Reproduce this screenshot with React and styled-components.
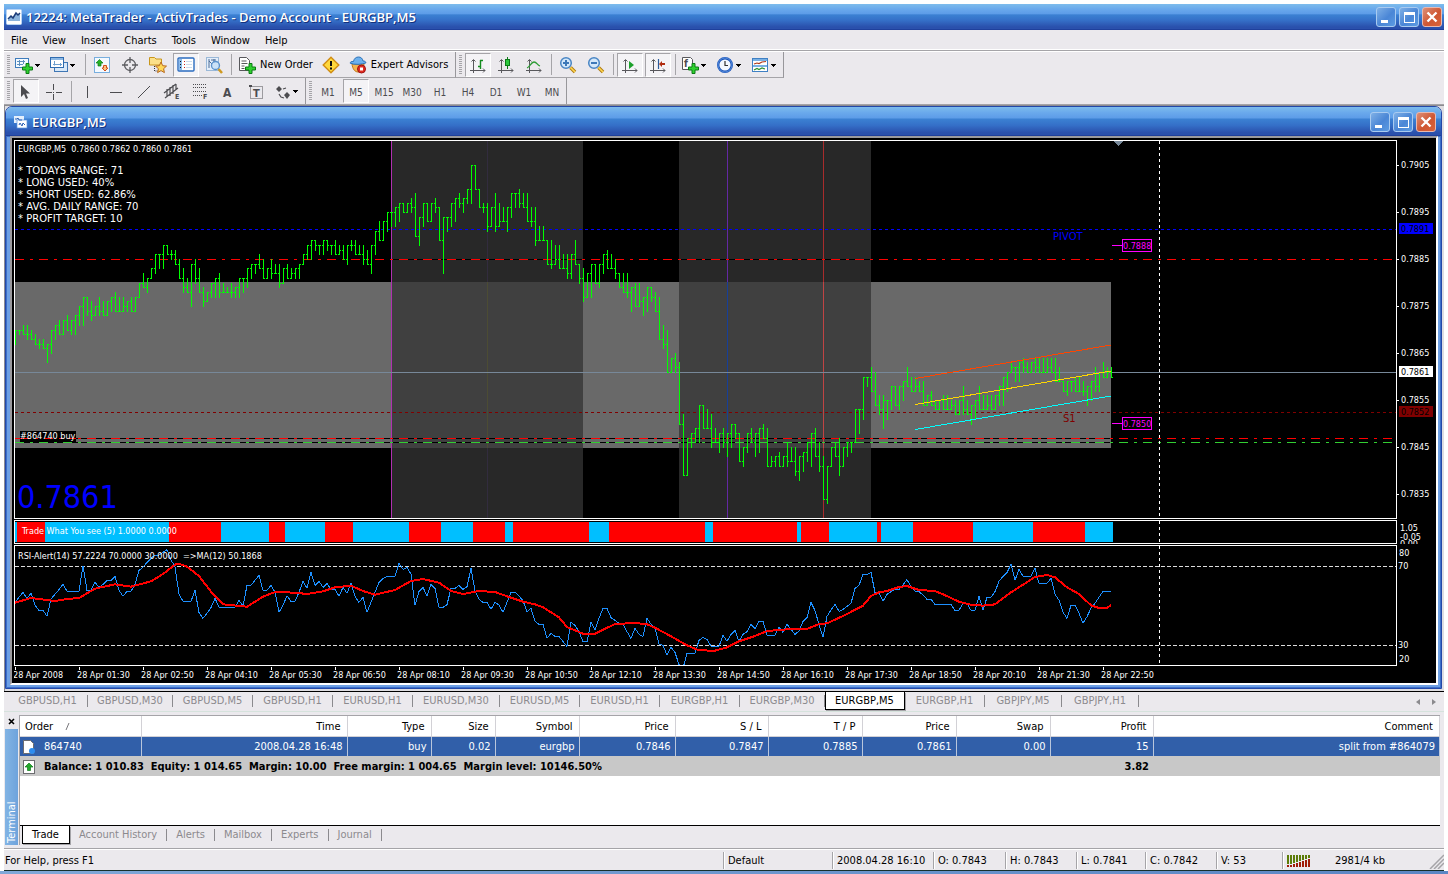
import React from "react";
import styled, { createGlobalStyle, css } from "styled-components";

const GlobalStyle = createGlobalStyle`
  * {
    box-sizing: border-box;
  }
  body {
    margin: 0;
    background: #fff;
    color: #000;
    font-family: "DejaVu Sans Condensed", "DejaVu Sans", sans-serif;
    font-size: 11px;
    line-height: 14px;
  }
  button {
    font: inherit;
    color: inherit;
    background: none;
    border: 0;
    padding: 0;
    cursor: pointer;
  }
`;

const titleGradient = "linear-gradient(#7dbcec 0%, #6aa9ec 20%, #5e9de8 38%, #3b80d2 44%, #3570c8 65%, #2a50ac 92%)";

/* ---------- data ---------- */

// high / low of every bar, in pips below 0.7905
const BARS =
  "35-38 35-36 34-36 34-37 35-37 36-38 37-39 37-39 38-42 35-40 34-37 33-36 33-36 32-35 33-36 32-36 30-34 28-34 28-32 29-33 " +
  "30-32 28-32 29-32 29-32 28-31 27-31 28-31 28-31 29-31 28-31 28-31 25-28 23-26 24-27 22-24 19-23 19-22 17-22 17-19 18-20 " +
  "18-21 20-24 22-27 24-27 21-30 20-25 22-27 26-30 27-29 25-28 24-28 23-28 25-27 26-27 25-28 26-28 24-28 24-27 22-26 21-24 " +
  "21-23 19-22 20-24 22-24 20-24 21-23 21-26 22-25 21-24 22-24 22-24 21-24 19-21 17-20 16-20 16-18 17-19 16-19 16-18 17-19 " +
  "16-19 17-19 17-20 17-21 16-18 16-19 17-19 17-21 18-21 17-23 14-19 12-16 12-16 10-14 10-13 9-13 8-12 8-10 8-10 7-10 " +
  "6-15 11-17 8-13 8-12 8-12 7-10 9-16 11-23 11-14 8-13 7-12 6-9 7-10 5-8 0-8 0-5 5-9 8-10 8-14 9-13 " +
  "6-14 8-13 9-12 9-14 6-11 6-9 5-9 6-9 6-12 9-13 9-17 13-16 13-16 16-21 16-22 17-21 17-22 19-22 19-24 19-24 " +
  "16-21 21-25 22-29 23-28 21-28 21-25 21-26 19-23 18-22 19-22 20-24 23-26 23-27 23-28 26-31 25-30 25-30 28-32 26-31 26-29 " +
  "27-31 28-37 34-39 35-44 41-44 40-44 42-55 53-66 58-66 57-60 56-59 51-59 51-56 52-56 53-60 56-59 57-61 56-60 57-62 55-60 " +
  "55-58 57-63 60-64 57-61 56-59 57-62 56-61 55-58 56-64 62-64 62-64 61-64 62-64 59-64 60-63 60-66 62-67 61-65 59-63 57-64 " +
  "56-62 59-65 62-71 64-72 60-64 59-62 58-66 60-64 59-62 59-61 52-59 52-57 45-54 45-47 43-48 44-51 49-53 49-56 50-54 47-52 " +
  "47-51 47-52 46-50 43-47 45-48 45-48 46-48 46-51 49-51 48-51 50-52 50-52 49-52 49-52 50-52 50-53 50-53 47-53 50-53 51-55 " +
  "50-54 47-52 49-52 49-52 49-52 49-52 47-51 45-51 44-48 42-44 43-46 42-46 41-44 42-44 42-44 41-44 41-44 41-44 41-44 41-44 " +
  "41-46 43-46 46-48 46-49 46-48 45-48 45-48 46-49 47-51 46-50 43-48 44-48 42-45 43-45 43-45";

const bars = BARS.split(" ").map((pair) => {
  const [high, low] = pair.split("-").map(Number);
  return { high, low };
});

// one sample per bar, three units to the pixel
const RSI = [
  607, 592, 577, 595, 580, 615, 631, 631, 649, 597, 583, 569, 553, 574, 574, 574, 574, 497, 571, 571, 547, 562, 553, 541,
  541, 529, 571, 589, 574, 574, 553, 511, 502, 487, 475, 465, 465, 457, 449, 480, 500, 583, 604, 604, 604, 571, 637, 655,
  640, 623, 595, 622, 622, 622, 622, 622, 601, 618, 556, 556, 541, 526, 571, 571, 556, 577, 637, 616, 587, 604, 604, 577,
  544, 565, 517, 556, 544, 562, 550, 568, 568, 589, 562, 580, 550, 589, 607, 592, 637, 607, 577, 547, 535, 529, 529, 529,
  490, 508, 502, 523, 616, 574, 562, 589, 553, 565, 622, 622, 614, 565, 565, 556, 568, 560, 505, 573, 598, 607, 607, 628,
  607, 615, 637, 607, 577, 577, 588, 602, 636, 625, 664, 673, 673, 715, 700, 709, 709, 725, 739, 667, 676, 695, 725, 725,
  667, 691, 655, 625, 625, 653, 661, 670, 673, 695, 715, 685, 703, 709, 655, 673, 685, 733, 736, 766, 742, 757, 794, 805,
  760, 760, 760, 721, 712, 718, 739, 739, 739, 706, 724, 703, 691, 724, 703, 695, 673, 686, 664, 664, 706, 706, 706, 682,
  697, 673, 688, 703, 693, 664, 653, 607, 632, 673, 712, 649, 630, 613, 634, 628, 619, 610, 565, 556, 523, 523, 517, 577,
  580, 604, 583, 575, 568, 568, 555, 539, 561, 573, 575, 585, 598, 598, 613, 613, 613, 613, 613, 631, 631, 611, 611, 631,
  631, 589, 631, 592, 592, 575, 544, 529, 518, 493, 541, 508, 529, 529, 529, 505, 550, 550, 550, 535, 583, 601, 637, 655,
  616, 616, 640, 670, 650, 625, 610, 592, 574, 574, 574,
];

const MA = [
  [0, 608], [4, 594], [10, 603], [13, 597], [16, 594], [20, 566], [25, 553], [29, 560], [34, 544], [37, 522], [40, 494],
  [41, 491], [43, 500], [46, 528], [49, 575], [52, 613], [58, 620], [62, 590], [65, 576], [70, 578], [73, 582], [77, 574],
  [80, 562], [84, 557], [87, 573], [90, 584], [95, 570], [99, 543], [102, 537], [106, 548], [109, 573], [112, 582],
  [116, 573], [120, 576], [123, 589], [127, 605], [130, 613], [132, 622], [136, 652], [138, 681], [142, 701], [145, 701],
  [150, 672], [155, 669], [158, 673], [160, 683], [164, 709], [168, 736], [171, 751], [175, 752], [178, 742], [181, 724],
  [185, 708], [188, 693], [193, 688], [198, 687], [201, 672], [203, 670], [207, 648], [212, 617], [214, 588], [216, 577],
  [218, 573], [221, 561], [223, 558], [226, 570], [230, 573], [232, 583], [236, 605], [239, 614], [242, 617], [245, 613],
  [249, 577], [252, 554], [255, 531], [258, 525], [260, 532], [263, 562], [266, 582], [269, 616], [271, 624], [273, 623],
  [274, 616],
];

// x where each trend block ends, starting with an up block
const TREND_STOPS = [
  2, 30, 154, 206, 254, 270, 310, 338, 394, 426, 458, 490, 498, 574, 594, 690, 698, 782, 786, 814, 862, 866, 898, 958,
  1018, 1070, 1098,
];

const TIMES = [
  "2008", "01:30", "02:50", "04:10", "05:30", "06:50", "08:10", "09:30", "10:50", "12:10", "13:30", "14:50", "16:10",
  "17:30", "18:50", "20:10", "21:30", "22:50",
];

const PRICES = ["0.7905", "0.7895", "0.7885", "0.7875", "0.7865", "0.7855", "0.7845", "0.7835"];

const RANGE_INFO = [
  "TODAYS RANGE: 71",
  "LONG USED: 40%",
  "SHORT USED: 62.86%",
  "AVG. DAILY RANGE: 70",
  "PROFIT TARGET: 10",
];

const CHART_TABS = [
  ["GBPUSD,H1", 80], ["GBPUSD,M30", 85], ["GBPUSD,M5", 80], ["GBPUSD,H1", 80], ["EURUSD,H1", 80], ["EURUSD,M30", 87],
  ["EURUSD,M5", 80], ["EURUSD,H1", 80], ["EURGBP,H1", 80], ["EURGBP,M30", 85], ["EURGBP,M5", 80], ["EURGBP,H1", 80],
  ["GBPJPY,M5", 77], ["GBPJPY,H1", 77],
];

const COLUMNS = [
  ["Order", 121], ["Time", 206], ["Type", 84], ["Size", 64], ["Symbol", 84], ["Price", 96], ["S / L", 93],
  ["T / P", 94], ["Price", 94], ["Swap", 94], ["Profit", 103], ["Comment", undefined],
];

const ORDER = [
  "864740", "2008.04.28 16:48", "buy", "0.02", "eurgbp", "0.7846", "0.7847", "0.7885", "0.7861", "0.00", "15",
  "split from #864079",
];

const barX = (i) => i * 4;
const priceY = (pips) => Math.round(24 + pips * 4.7);
const rsiY = (v) => v / 3 - 146;

/* ---------- window chrome ---------- */

const Page = styled.div`
  display: flex;
  flex-direction: column;
  min-height: 100vh;
  padding: 4px 4px 0;
`;

const TitleBar = styled.header`
  display: flex;
  align-items: center;
  gap: 4px;
  height: ${(p) => (p.$child ? 29 : 26)}px;
  padding: ${(p) => (p.$child ? "1px 5px 0 8px" : "0 2px")};
  background: ${titleGradient};
  border-bottom: 1px solid #1f409c;
`;

const Title = styled.h1`
  flex: 1;
  margin: 0;
  color: #fff;
  font: 600 13px/18px "Open Sans", "Noto Sans", sans-serif;
  text-shadow: 1px 1px 0 #14317c;
  white-space: nowrap;
`;

const WindowButtons = styled.div`
  display: flex;
  gap: 3px;
`;

const WindowButton = styled.button`
  width: 20px;
  height: 20px;
  border: 1px solid ${(p) => (p.$close ? "#e8b9b0" : "#a9cbf0")};
  border-radius: 3px;
  background: ${(p) =>
    p.$close
      ? "linear-gradient(135deg, #dd8f78, #cf5733 55%, #d9633a)"
      : "linear-gradient(135deg, #7fb0e6, #4a86d6 55%, #5c9be2)"};

  svg {
    display: block;
  }
`;

const MenuBar = styled.nav`
  display: flex;
  height: 22px;
  background: #ebe9ed;
  border-bottom: 1px solid #fff;
  box-shadow: inset 0 -1px #a5a4a8, inset 0 -2px #fff;
`;

const MenuItem = styled.button`
  height: 21px;
  padding: 0 8px 0 7px;
`;

const Toolbars = styled.div`
  background: #ebe9ed;
  border-bottom: 1px solid #a5a4a8;
`;

const ToolRow = styled.div`
  display: flex;
  height: 26px;
`;

const ToolGroup = styled.div`
  display: flex;
  align-items: center;
  padding-right: ${(p) => p.$end || 0}px;
  border-right: 1px solid #98979b;
  ${(p) =>
    p.$lined &&
    css`
      border-bottom: 1px solid #a5a4a8;
    `}
`;

const Grip = styled.span`
  width: 3px;
  height: 20px;
  margin: 0 2px 0 3px;
  background: repeating-linear-gradient(#a5a4a8 0 1px, #ebe9ed 1px 2px);
`;

const Separator = styled.span`
  width: 1px;
  height: 21px;
  margin: 0 2px 0 3px;
  background: #a5a4a8;
`;

const ToolButton = styled.button`
  display: flex;
  align-items: center;
  justify-content: center;
  gap: 4px;
  width: 28px;
  height: 24px;
  padding-top: ${(p) => (p.$period ? 3 : 1)}px;
  color: #4c4c50;
  font-size: ${(p) => (p.$period ? 10 : 11)}px;
  ${(p) =>
    p.$wide &&
    css`
      width: auto;
      padding: 1px 4px 0;
      color: #000;
    `}
  ${(p) =>
    p.$menu &&
    css`
      justify-content: flex-start;
      gap: 2px;
      width: 35px;
      padding-left: 3px;
    `}
  ${(p) =>
    p.$pressed &&
    css`
      width: 26px;
      margin: 0 1px;
      border: 1px solid #fff;
      border-top-color: #a5a4a8;
      border-left-color: #a5a4a8;
      background: #f4f3f6;
    `}
`;

/* ---------- chart window ---------- */

const Workspace = styled.main`
  padding: 0 2px 2px 0;
  background: #dedde1;
  border: solid #8c8b90;
  border-width: 1px 0 0 1px;
`;

const ChartWindow = styled.section`
  border: 1px solid #2348a8;
  border-radius: 7px 7px 0 0;
  overflow: hidden;
`;

const ChartFrame = styled.div`
  padding: 0 3px 3px 4px;
  background: #6d9fe4;
  box-shadow: inset 0 0 0 1px #3c6fc8;
`;

const ChartBody = styled.div`
  display: flex;
  flex-direction: column;
  padding: 2px 0 0 2px;
  gap: 1px;
  background: #000;
  border: 2px solid #9b9a9e;
  border-right-color: #fff;
  border-bottom-color: #fff;
`;

const PaneRow = styled.div`
  display: flex;
`;

const Pane = styled.svg`
  flex: 1;
  min-width: 0;
  height: ${(p) => p.$h}px;
  border: 1px solid #fff;
  background: #000;
`;

const Axis = styled.svg`
  flex: none;
  width: 39px;
  height: ${(p) => p.$h}px;
`;

const ChartText = styled.text`
  font-size: 9px;
  fill: ${(p) => p.$fill || "#fff"};
  white-space: pre;
`;

const WideText = styled(ChartText)`
  font-family: "DejaVu Sans", sans-serif;
  font-size: 10px;
`;

const BigPrice = styled.text`
  font-size: 32px;
  fill: #00f;
`;

const TimeScale = styled.svg`
  width: 100%;
  height: 16px;
`;

/* ---------- tabs ---------- */

const ChartTabs = styled.div`
  display: flex;
  height: 21px;
  padding-left: 4px;
  background: #ebe9ed;
  border-top: 1px solid #000;
  border-bottom: 1px solid #d5e2dc;
`;

const ChartTab = styled.button`
  width: ${(p) => p.$w}px;
  height: 18px;
  padding-right: 1px;
  color: #8b8a8e;
  white-space: nowrap;
  background: linear-gradient(#8b8a8e, #8b8a8e) right center / 1px 12px no-repeat;
  ${(p) =>
    p.$active &&
    css`
      color: #000;
      background: #fff;
      border: 1px solid #000;
      border-top: 0;
      box-shadow: 1px 1px #a5a4a8;
    `}
`;

const TabArrows = styled.div`
  display: flex;
  gap: 12px;
  align-items: center;
  margin-left: auto;
  padding-right: 8px;
`;

/* ---------- terminal ---------- */

const Terminal = styled.section`
  display: flex;
  flex: 1;
  padding: 3px 4px 3px 1px;
  background: #ebe9ed;
`;

const TerminalSide = styled.div`
  display: flex;
  flex-direction: column;
  align-items: center;
  width: 13px;
  margin-right: 1px;
`;

const TerminalTitle = styled.h2`
  flex: 1;
  align-self: stretch;
  margin: 0;
  padding-top: 2px;
  color: #fff;
  background: linear-gradient(90deg, #6ea3dc, #82b4e4);
  font-size: 11px;
  font-weight: normal;
  line-height: 13px;
  writing-mode: vertical-rl;
  transform: rotate(180deg);
`;

const CloseButton = styled.button`
  width: 13px;
  height: 14px;
`;

const TerminalBody = styled.div`
  display: flex;
  flex: 1;
  flex-direction: column;
  min-width: 0;
  border: solid #a5a4a8;
  border-width: 1px 0 0 1px;
`;

const TableArea = styled.div`
  flex: 1;
  background: #fff;
`;

const Orders = styled.table`
  width: 100%;
  border-collapse: collapse;
  table-layout: fixed;
`;

const HeadCell = styled.th`
  height: 20px;
  padding: 2px 6px 0 5px;
  font-weight: normal;
  text-align: ${(p) => (p.$left ? "left" : "right")};
  border-right: 1px solid #d2d1d6;
  border-bottom: 1px solid #d2d1d6;

  svg {
    margin-left: 12px;
  }
`;

const Cell = styled.td`
  height: 20px;
  padding: 2px 4px 0 3px;
  color: #fff;
  background: #315fa9;
  text-align: ${(p) => (p.$left ? "left" : "right")};
  border-right: 1px solid #b9c6dc;
`;

const TotalCell = styled.td`
  height: 20px;
  padding: 2px 4px 0 3px;
  background: #c8c8c8;
  font-weight: bold;
  text-align: ${(p) => (p.$left ? "left" : "right")};
`;

const IconLine = styled.span`
  display: flex;
  align-items: center;
  gap: 9px;
`;

const TerminalTabs = styled.div`
  display: flex;
  height: 20px;
  padding-left: 2px;
  border-top: 1px solid #000;
`;

const TerminalTab = styled.button`
  height: 18px;
  padding: 0 10px 0 9px;
  color: #8b8a8e;
  background: linear-gradient(#8b8a8e, #8b8a8e) right center / 1px 12px no-repeat;
  ${(p) =>
    p.$active &&
    css`
      color: #000;
      background: #fff;
      border: 1px solid #000;
      border-top: 0;
      box-shadow: 1px 1px #a5a4a8;
    `}
`;

const StatusBar = styled.footer`
  display: flex;
  align-items: center;
  height: 23px;
  padding-top: 2px;
  background: #ebe9ed;
  border-top: 1px solid #a5a4a8;
  border-bottom: 1px solid #16302c;
  box-shadow: inset 0 1px #fff;
`;

const StatusCell = styled.span`
  display: flex;
  align-items: center;
  width: ${(p) => p.$w}px;
  height: 17px;
  padding-left: 4px;
  gap: 24px;
  border-left: 1px solid #a5a4a8;
  box-shadow: inset 1px 0 #fff;
  white-space: nowrap;
`;

const StatusHelp = styled.span`
  flex: 1;
  padding-left: 1px;
`;

const BottomEdge = styled.div`
  height: 3px;
  margin: 0 -4px;
  background: linear-gradient(90deg, #7fa8d8, #5b86c4);
`;

/* ---------- icons ---------- */

const Svg = ({ w = 18, h = 18, children, ...rest }) => (
  <svg width={w} height={h} viewBox={`0 0 ${w} ${h}`} fill="none" aria-hidden="true" {...rest}>
    {children}
  </svg>
);

const IconText = styled.text`
  font-size: ${(p) => p.$size}px;
  font-weight: bold;
  fill: #4c4c50;
`;

const Caret = () => (
  <Svg w={5} h={3} shapeRendering="crispEdges">
    <path d="M0 0h5v1H4v1H3v1H2V2H1V1H0z" fill="#000" />
  </Svg>
);

const Plus = () => <path d="M11 7.500h3v3.500h3.500v3H14v3.500h-3V14H7.500v-3H11z" fill="#2fd02f" stroke="#0b7a14" />;

const NewChartIcon = () => (
  <Svg>
    <rect x=".5" y="2.500" width="13" height="9" fill="#f4faff" stroke="#3f7cbc" />
    <path d="M2 5.500h8M2 8.500h6M4.500 4v6M8.500 4v4" stroke="#5f8fbe" />
    <Plus />
  </Svg>
);

const ProfilesIcon = () => (
  <Svg>
    <rect x="4.500" y="6.500" width="13" height="9" fill="#d8e8f8" stroke="#3f76b4" />
    <rect x=".5" y="1.500" width="13" height="10" fill="#fff" stroke="#2f6cb0" />
    <path d="M1 3h12" stroke="#8cb8e4" strokeWidth="2" />
    <path d="M3 8.500h9M4.500 5v4.500M10.500 7v3" stroke="#6f9fce" />
  </Svg>
);

const MarketWatchIcon = () => (
  <Svg>
    <rect x="1.500" y="1.500" width="15" height="15" fill="#f4f9ff" stroke="#78aede" />
    <path d="M6.500 3.500l3.500 3.500H8v3H5V7H3z" fill="#28b428" stroke="#0c7a18" strokeWidth=".7" />
    <path d="M12 15l-3-3h1.500v-2.500h3V12H15z" fill="#ffc080" stroke="#d0501c" />
  </Svg>
);

const TargetIcon = () => (
  <Svg>
    <circle cx="9" cy="9" r="5.500" stroke="#5c5c60" strokeWidth="1.300" />
    <path d="M9 1v6M9 11v6M1 9h6M11 9h6" stroke="#5c5c60" strokeWidth="1.300" />
  </Svg>
);

const FavoritesIcon = () => (
  <Svg>
    <path d="M.5 3V1.500h5L7 3h5.500v6h-12z" fill="#fbe08a" stroke="#c8961c" />
    <path d="M5.500 10v5h4" stroke="#333" strokeDasharray="1 1" />
    <path d="M12 6l1.700 3.700 3.800.4-2.900 2.600.8 3.900L12 14.600l-3.400 2 .8-3.900-2.900-2.600 3.800-.4z" fill="#ffd858" stroke="#b8681c" />
  </Svg>
);

const NavigatorIcon = () => (
  <Svg>
    <rect x="1" y="2" width="16" height="13" rx="1" fill="#fff" stroke="#2a6cc0" strokeWidth="1.400" />
    <rect x="2" y="3" width="3" height="11" fill="#8cbcec" />
    <path d="M3.500 5v8" stroke="#111" strokeDasharray="1 2" />
    <path d="M7 5.500h1M7 8.500h1M7 11.500h1" stroke="#c02020" />
    <path d="M9 5.500h6M9 8.500h6M9 11.500h6" stroke="#a8c4e0" strokeWidth=".6" />
  </Svg>
);

const TesterIcon = () => (
  <Svg>
    <rect x="1.500" y="1.500" width="12" height="13" fill="#e4eefa" stroke="#9ab8d8" />
    <path d="M4 3v9M4 5l3 3M9 3v4M6 4h5" stroke="#4d6c98" />
    <circle cx="10.500" cy="9.500" r="4" fill="#c4def8" fillOpacity=".8" stroke="#5a92cc" strokeWidth="1.300" />
    <path d="M13.500 13l3.500 4" stroke="#d09a20" strokeWidth="2.500" />
  </Svg>
);

const OrderIcon = () => (
  <Svg>
    <path d="M1.500 1.500h7l3 3v10h-10z" fill="#fff" stroke="#58585c" />
    <path d="M3.500 5h5M3.500 7.500h6M3.500 10h3M3.500 12.500h3" stroke="#58585c" />
    <Plus />
  </Svg>
);

const AlertIcon = () => (
  <Svg>
    <path d="M9 1.200L16.800 9 9 16.800 1.200 9z" fill="#ffd83c" stroke="#d08c14" strokeWidth="1.400" />
    <path d="M9 5v5M9 11.500v2" stroke="#101010" strokeWidth="2" />
  </Svg>
);

const ExpertIcon = () => (
  <Svg>
    <path d="M3 8h12c-.5 5-3 8-6 8S3.500 13 3 8z" fill="#f4b450" stroke="#c07818" />
    <path d="M4.500 5.500C5 2.500 7 1 9.500 1s4 1.500 4.500 4c2 0 3 .8 2.800 2C13 8.500 5 9 1.200 7.200 1 6 2.500 5.300 4.500 5.500z" fill="#6cb0ec" stroke="#2a70b8" />
    <circle cx="12.500" cy="13" r="4" fill="#e02c20" stroke="#a01010" />
    <rect x="11" y="11.500" width="3" height="3" fill="#fff" />
  </Svg>
);

const Axes = () => (
  <path d="M4.500 4v13M1 14.500h15M2.500 5.500l2-2 2 2M14 12.500l2 2-2 2" stroke="#58585c" />
);

const BarChartIcon = () => (
  <Svg>
    <Axes />
    <path d="M11.500 4v9M11 4.500h3M9 10.500h3" stroke="#148c20" strokeWidth="1.400" />
  </Svg>
);

const CandleIcon = () => (
  <Svg>
    <Axes />
    <path d="M10.500 1v12" stroke="#0c7a18" />
    <rect x="8.500" y="3.500" width="4" height="6" fill="#2cc83c" stroke="#0c7a18" />
  </Svg>
);

const LineChartIcon = () => (
  <Svg>
    <Axes />
    <path d="M2 12c3-1 4-6 7-6s3 3 6 4" stroke="#2c9c34" strokeWidth="1.300" />
  </Svg>
);

const ZoomIcon = ({ plus }) => (
  <Svg>
    <circle cx="7" cy="7" r="5.300" fill="#d4e8fa" stroke="#4a86c4" strokeWidth="1.500" />
    <path d={plus ? "M4 7h6M7 4v6" : "M4 7h6"} stroke="#3c78b8" strokeWidth="2" />
    <path d="M11.500 11.500l4.500 4.500" stroke="#b07c14" strokeWidth="3.600" />
    <path d="M11.500 11.500l4.500 4.500" stroke="#ffd850" strokeWidth="1.600" />
  </Svg>
);

const ZoomInIcon = () => <ZoomIcon plus />;

const ScrollIcon = () => (
  <Svg>
    <Axes />
    <path d="M8 5l5 4-5 4z" fill="#1ca02c" />
  </Svg>
);

const ShiftIcon = () => (
  <Svg>
    <Axes />
    <path d="M9.500 3v10" stroke="#2c5c9c" strokeWidth="1.200" />
    <path d="M10 8l3-3v2h3v2h-3v2z" fill="#b02c10" />
  </Svg>
);

const IndicatorIcon = () => (
  <Svg>
    <path d="M1.500 1.500h8l2 2v10h-10z" fill="#fff" stroke="#58585c" />
    <IconText x="3" y="11" $size={10}>f</IconText>
    <Plus />
  </Svg>
);

const ClockIcon = () => (
  <Svg>
    <circle cx="9" cy="9" r="6.800" fill="#f4f8ff" stroke="#1c54b8" strokeWidth="2.400" />
    <circle cx="9" cy="9" r="7" stroke="#6ca4ec" strokeWidth=".7" />
    <path d="M9 5v4.500h3" stroke="#333" strokeWidth="1.200" />
  </Svg>
);

const TemplateIcon = () => (
  <Svg>
    <rect x="1.500" y="2.500" width="15" height="13" fill="#fff" stroke="#3f80c4" />
    <path d="M2 4h14M2 10h14" stroke="#78b0e4" strokeWidth="2" />
    <path d="M3 8l3-1 2 .5 3-1.500 4-.5" stroke="#b03818" strokeWidth="1.200" />
    <path d="M3 14l3-1.500 2 1 3-1.500 3 1" stroke="#2c9030" strokeWidth="1.200" />
  </Svg>
);

const PointerIcon = () => (
  <Svg>
    <path d="M4 2v12l3-3 2 5 2-1-2-4.500h4z" fill="#4c4c50" />
  </Svg>
);

const line = (d) => () => (
  <Svg>
    <path d={d} stroke="#4c4c50" />
  </Svg>
);

const CrossIcon = line("M8.500 1v6M8.500 11v6M1 9.500h6M11 9.500h6M8 9.500h1");
const VLineIcon = line("M8.500 3v12");
const HLineIcon = line("M3 9.500h12");
const TrendIcon = line("M3 15L15 3");

const ChannelIcon = () => (
  <Svg>
    <path d="M1 10L13 1M2 15L15 5M4 6v8M7 4v9M10 2v9M13 1v6" stroke="#4c4c50" strokeWidth="1.200" />
    <IconText x="12" y="16" $size={7}>E</IconText>
  </Svg>
);

const FiboIcon = () => (
  <Svg>
    <path d="M2 1.500h14M2 4.500h14M2 8.500h14M2 12.500h9" stroke="#4c4c50" strokeDasharray="1 1" />
    <IconText x="12" y="16" $size={7}>F</IconText>
  </Svg>
);

const TextIcon = () => (
  <Svg>
    <IconText x="4" y="14" $size={12}>A</IconText>
  </Svg>
);

const LabelIcon = () => (
  <Svg>
    <rect x="3.500" y="3.500" width="12" height="12" stroke="#4c4c50" strokeDasharray="1 1" />
    <rect x="2" y="2" width="3" height="2" fill="#4c4c50" />
    <IconText x="6" y="14" $size={11}>T</IconText>
  </Svg>
);

const ArrowsIcon = () => (
  <Svg>
    <path d="M6 3l3 3-3 3-3-3zM14 9l3 3-3 4-3-4z" fill="#4c4c50" />
    <path d="M6 11l2 3 3 1M10 6l3-1" stroke="#4c4c50" strokeWidth="1.200" />
  </Svg>
);

const AppIcon = () => (
  <Svg w={16} h={16}>
    <rect x=".5" y=".5" width="15" height="15" rx="1" fill="#fff" stroke="#b8d4f4" />
    <path d="M2 11l3-4 2 2 3-5 2 2 2-2v8H2z" fill="#8cb4dc" />
    <path d="M2 10l3-3 2 2 3-5 2 2 2-2" stroke="#1c3c78" strokeWidth="1.500" />
  </Svg>
);

const ChildIcon = () => (
  <Svg w={14} h={14}>
    <rect x="0" y="1" width="10" height="7" fill="#e4effc" />
    <rect x="3" y="5" width="10" height="8" fill="#fff" stroke="#5c94dc" strokeWidth=".7" />
    <path d="M1 4h2l1-1 1 2h3M5 10l1-2 2 3 1-3 2 2" stroke="#2c60b4" />
  </Svg>
);

const MinIcon = () => (
  <Svg>
    <path d="M4 13.500h7" stroke="#fff" strokeWidth="3" />
  </Svg>
);

const MaxIcon = () => (
  <Svg shapeRendering="crispEdges">
    <rect x="4.500" y="4.500" width="10" height="10" stroke="#fff" />
    <path d="M4 5.500h11" stroke="#fff" strokeWidth="3" />
  </Svg>
);

const CloseIcon = () => (
  <Svg>
    <path d="M4.500 4.500l9 9M13.500 4.500l-9 9" stroke="#fff" strokeWidth="2.400" />
  </Svg>
);

const TrafficIcon = () => (
  <Svg w={24} h={12} shapeRendering="crispEdges">
    {[9, 9, 8, 7, 6, 5, 4, 3].map((h, i) => (
      <g key={i}>
        <rect x={i * 3} y="0" width="2" height={h} fill="#5c7c08" />
        <rect x={i * 3} y={h + 1} width="2" height={11 - h} fill="#a01c08" />
      </g>
    ))}
  </Svg>
);

/* ---------- parts ---------- */

const Controls = () => (
  <WindowButtons>
    <WindowButton aria-label="Minimize"><MinIcon /></WindowButton>
    <WindowButton aria-label="Maximize"><MaxIcon /></WindowButton>
    <WindowButton aria-label="Close" $close><CloseIcon /></WindowButton>
  </WindowButtons>
);

const Tool = ({ icon: Icon, label, menu, pressed }) => (
  <ToolButton aria-label={label} $menu={menu} $pressed={pressed}>
    <Icon />
    {menu && <Caret />}
  </ToolButton>
);

const clamp = (v, { high, low }) => Math.min(Math.max(v, high), low);

// rising bars close near their high, falling ones near their low
const closes = bars.map((bar, i) => {
  const next = bars[i + 1] || bar;
  const rising = next.high + next.low < bar.high + bar.low;
  const end = rising ? bar.high : i % 3 ? bar.low : bar.low - 1;
  return clamp(clamp(end, next), bar);
});

const barPath = bars
  .map((bar, i) => {
    const x = barX(i);
    const top = priceY(bar.high);
    const open = priceY(clamp(i ? closes[i - 1] : bar.low, bar));
    const close = priceY(closes[i]);
    return `M${x} ${top}h1V${priceY(bar.low) + 1}h-1zM${x - 1} ${open}h1v1h-1zM${x + 1} ${close}h1v1h-1z`;
  })
  .join("");

const Level = ({ y, color, dash, backed }) => (
  <g>
    {backed && <line x1="0" x2="1096" y1={y + 0.5} y2={y + 0.5} stroke="#000" />}
    <line x1="0" x2="100%" y1={y + 0.5} y2={y + 0.5} stroke={color} strokeDasharray={dash} />
  </g>
);

const PriceTag = ({ y, children }) => (
  <g>
    <path d={`M1097 ${y + 0.5}h10`} stroke="#f0f" />
    <rect x="1107.5" y={y - 5.5} width="29" height="12" fill="#000" stroke="#f0f" />
    <ChartText x="1108" y={y + 4} $fill="#f0f">{children}</ChartText>
  </g>
);

const Cursor = () => <line x1="1144.5" x2="1144.5" y1="0" y2="100%" stroke="#fff" strokeDasharray="3 3" />;

const PricePane = () => (
  <PaneRow>
    <Pane $h={379} shapeRendering="crispEdges">
      <rect x="0" y="141" width="1096" height="166" fill="#696969" />
      <rect x="376" y="0" width="192" height="100%" fill="#282828" />
      <rect x="376" y="141" width="192" height="166" fill="#404040" />
      <rect x="664" y="0" width="192" height="100%" fill="#282828" />
      <rect x="664" y="141" width="192" height="166" fill="#404040" />
      <path d="M376.500 0v377" stroke="#b030b0" />
      <path d="M472.500 0v141M472.500 307v70" stroke="#322c3e" />
      <path d="M472.500 141v166" stroke="#4c4c34" />
      <path d="M712.500 0v141M712.500 307v70" stroke="#6428a4" />
      <path d="M712.500 141v166" stroke="#173f98" />
      <path d="M808.500 0v141M808.500 307v70" stroke="#a82c2c" />
      <path d="M808.500 141v166" stroke="#c04444" />
      <Level y={88} color="#00f" dash="3 3" />
      <Level y={118} color="#f00" dash="9 6 3 6" backed />
      <Level y={231} color="#778899" />
      <Level y={271} color="#800000" dash="3 3" />
      <Level y={297} color="#f00" dash="9 6 3 6" backed />
      <Level y={301} color="#32cd32" dash="9 6 3 6" backed />
      <path d={barPath} fill="#0f0" />
      <g fill="none">
        <path d="M900 237.500L1096 204" stroke="#ff4500" />
        <path d="M900 263.500L1096 230" stroke="#ffd700" />
        <path d="M900 288.500L1096 255" stroke="#0ff" />
      </g>
      <rect x="5" y="290" width="56" height="11" fill="#000" />
      <path d="M5 297.500h56" stroke="#f00" strokeDasharray="9 6 3 6" />
      <ChartText x="5" y="298">#864740 buy</ChartText>
      <ChartText x="3" y="11">EURGBP,M5  0.7860 0.7862 0.7860 0.7861</ChartText>
      {RANGE_INFO.map((row, i) => (
        <WideText key={row} x="3" y={33 + i * 12}>* {row}</WideText>
      ))}
      <BigPrice x="2" y="367">0.7861</BigPrice>
      <WideText x="1038" y="99" $fill="#00f">PIVOT</WideText>
      <WideText x="1048" y="281" $fill="#800000">S1</WideText>
      <PriceTag y={104}>0.7888</PriceTag>
      <PriceTag y={282}>0.7850</PriceTag>
      <path d="M1099 0h9l-4.500 5z" fill="#778899" />
      <Cursor />
    </Pane>
    <Axis $h={379} shapeRendering="crispEdges">
      {PRICES.map((price, i) => (
        <g key={price}>
          <path d={`M0 ${25.5 + i * 47}h2`} stroke="#fff" />
          <ChartText x="4" y={28 + i * 47}>{price}</ChartText>
        </g>
      ))}
      <rect x="2" y="83" width="34" height="11" fill="#00f" />
      <ChartText x="4" y="92" $fill="#000">0.7891</ChartText>
      <rect x="2" y="226" width="34" height="11" fill="#fff" />
      <ChartText x="4" y="235" $fill="#000">0.7861</ChartText>
      <rect x="2" y="266" width="34" height="11" fill="#800000" />
      <ChartText x="4" y="275" $fill="#000">0.7852</ChartText>
    </Axis>
  </PaneRow>
);

const TrendPane = () => (
  <PaneRow>
    <Pane $h={24} shapeRendering="crispEdges">
      {TREND_STOPS.map((end, i) => {
        const start = i ? TREND_STOPS[i - 1] : 0;
        return <rect key={end} x={start} y="1" width={end - start} height="20" fill={i % 2 ? "#f00" : "#00bfff"} />;
      })}
      <ChartText x="7" y="13">Trade What You see (5) 1.0000 0.0000</ChartText>
      <Cursor />
    </Pane>
    <Axis $h={24}>
      <ChartText x="3" y="11">1.05</ChartText>
      <ChartText x="3" y="20">-0.05</ChartText>
      <ChartText x="3" y="27">0.00</ChartText>
    </Axis>
  </PaneRow>
);

const RsiPane = () => (
  <PaneRow>
    <Pane $h={121} shapeRendering="crispEdges">
      <path d="M0 20.500H3000M0 99.500H3000" stroke="#dcdcdc" strokeDasharray="4 2" />
      <polyline points={RSI.map((v, i) => `${barX(i)},${rsiY(v)}`).join(" ")} fill="none" stroke="#1e90ff" />
      <polyline points={MA.map(([i, v]) => `${barX(i)},${rsiY(v)}`).join(" ")} fill="none" stroke="#f00" strokeWidth="2" />
      <ChartText x="3" y="13">RSI-Alert(14) 57.2224 70.0000 30.0000  =&gt;MA(12) 50.1868</ChartText>
      <Cursor />
    </Pane>
    <Axis $h={121}>
      <ChartText x="2" y="11">80</ChartText>
      <ChartText x="1" y="24">70</ChartText>
      <ChartText x="1" y="103">30</ChartText>
      <ChartText x="2" y="117">20</ChartText>
    </Axis>
  </PaneRow>
);

const periods = ["M1", "M5", "M15", "M30", "H1", "H4", "D1", "W1", "MN"];

const App = () => {
  return (
    <Page>
      <GlobalStyle />
      <TitleBar>
        <AppIcon />
        <Title>12224: MetaTrader - ActivTrades - Demo Account - EURGBP,M5</Title>
        <Controls />
      </TitleBar>
      <MenuBar>
        {["File", "View", "Insert", "Charts", "Tools", "Window", "Help"].map((item) => (
          <MenuItem key={item}>{item}</MenuItem>
        ))}
      </MenuBar>
      <Toolbars>
        <ToolRow>
          <ToolGroup $lined $end={3}>
            <Grip />
            <Tool icon={NewChartIcon} label="New chart" menu />
            <Tool icon={ProfilesIcon} label="Profiles" menu />
            <Separator />
            <Tool icon={MarketWatchIcon} label="Market watch" />
            <Tool icon={TargetIcon} label="Data window" />
            <Tool icon={FavoritesIcon} label="Navigator" />
            <Tool icon={NavigatorIcon} label="Terminal" pressed />
            <Tool icon={TesterIcon} label="Strategy tester" />
            <Separator />
            <ToolButton $wide><OrderIcon />New Order</ToolButton>
            <Tool icon={AlertIcon} label="Editor" />
            <ToolButton $wide><ExpertIcon />Expert Advisors</ToolButton>
          </ToolGroup>
          <ToolGroup $lined>
            <Grip />
            <Tool icon={BarChartIcon} label="Bar chart" pressed />
            <Tool icon={CandleIcon} label="Candlesticks" />
            <Tool icon={LineChartIcon} label="Line chart" />
            <Separator />
            <Tool icon={ZoomInIcon} label="Zoom in" />
            <Tool icon={ZoomIcon} label="Zoom out" />
            <Separator />
            <Tool icon={ScrollIcon} label="Auto scroll" pressed />
            <Tool icon={ShiftIcon} label="Chart shift" pressed />
            <Separator />
            <Tool icon={IndicatorIcon} label="Indicators" menu />
            <Tool icon={ClockIcon} label="Periods" menu />
            <Tool icon={TemplateIcon} label="Templates" menu />
          </ToolGroup>
        </ToolRow>
        <ToolRow>
          <ToolGroup>
            <Grip />
            <Tool icon={PointerIcon} label="Cursor" pressed />
            <Tool icon={CrossIcon} label="Crosshair" />
            <Separator />
            <Tool icon={VLineIcon} label="Vertical line" />
            <Tool icon={HLineIcon} label="Horizontal line" />
            <Tool icon={TrendIcon} label="Trendline" />
            <Tool icon={ChannelIcon} label="Channel" />
            <Tool icon={FiboIcon} label="Fibonacci" />
            <Tool icon={TextIcon} label="Text" />
            <Tool icon={LabelIcon} label="Text label" />
            <Tool icon={ArrowsIcon} label="Arrows" menu />
          </ToolGroup>
          <ToolGroup>
            <Grip />
            {periods.map((period) => (
              <ToolButton key={period} $period $pressed={period === "M5"}>{period}</ToolButton>
            ))}
          </ToolGroup>
        </ToolRow>
      </Toolbars>

      <Workspace>
        <ChartWindow>
          <TitleBar $child>
            <ChildIcon />
            <Title as="h2">EURGBP,M5</Title>
            <Controls />
          </TitleBar>
          <ChartFrame>
            <ChartBody>
              <PricePane />
              <TrendPane />
              <RsiPane />
              <TimeScale>
                {TIMES.map((time, i) => (
                  <g key={time}>
                    <path d={`M${i * 64 + 1.5} -1v4`} stroke="#fff" shapeRendering="crispEdges" />
                    <ChartText x={i * 64 - 1} y="11">28 Apr {time}</ChartText>
                  </g>
                ))}
              </TimeScale>
            </ChartBody>
          </ChartFrame>
        </ChartWindow>
      </Workspace>

      <ChartTabs>
        {CHART_TABS.map(([name, width], i) => (
          <ChartTab key={i} $w={width} $active={i === 10}>{name}</ChartTab>
        ))}
        <TabArrows>
          <button aria-label="Scroll left"><Svg w={4} h={6}><path d="M4 0v6L0 3z" fill="#8b8a8e" /></Svg></button>
          <button aria-label="Scroll right"><Svg w={4} h={6}><path d="M0 0v6l4-3z" fill="#8b8a8e" /></Svg></button>
        </TabArrows>
      </ChartTabs>

      <Terminal>
        <TerminalSide>
          <CloseButton aria-label="Close terminal">
            <Svg w={7} h={7}><path d="M1 1l5 5M6 1L1 6" stroke="#000" strokeWidth="1.600" /></Svg>
          </CloseButton>
          <TerminalTitle>Terminal</TerminalTitle>
        </TerminalSide>
        <TerminalBody>
          <TableArea>
            <Orders>
              <colgroup>
                {COLUMNS.map(([, width], i) => (
                  <col key={i} width={width} />
                ))}
              </colgroup>
              <thead>
                <tr>
                  {COLUMNS.map(([name], i) => (
                    <HeadCell key={i} $left={i === 0}>
                      {name}
                      {i === 0 && <Svg w={5} h={7}><path d="M1 7l3-7" stroke="#77767a" /></Svg>}
                    </HeadCell>
                  ))}
                </tr>
              </thead>
              <tbody>
                <tr>
                  {ORDER.map((value, i) => (
                    <Cell key={i} $left={i === 0}>
                      {i === 0 ? (
                        <IconLine>
                          <Svg w={12} h={14}>
                            <path d="M.5.500h7l3 3v10h-10z" fill="#fff" stroke="#6c6c70" />
                            <circle cx="9" cy="11" r="3" fill="#2c8cf0" />
                          </Svg>
                          {value}
                        </IconLine>
                      ) : (
                        value
                      )}
                    </Cell>
                  ))}
                </tr>
                <tr>
                  <TotalCell colSpan={10} $left>
                    <IconLine>
                      <Svg w={12} h={14}>
                        <rect x=".5" y=".5" width="11" height="13" fill="#fff" stroke="#6c6c70" />
                        <path d="M6 3l4 4H7.500v3.500h-3V7H2z" fill="#24a82c" stroke="#0c7a18" strokeWidth=".7" />
                      </Svg>
                      <span>
                        Balance: 1 010.83&nbsp; Equity: 1 014.65&nbsp; Margin: 10.00&nbsp; Free margin: 1 004.65&nbsp; Margin
                        level: 10146.50%
                      </span>
                    </IconLine>
                  </TotalCell>
                  <TotalCell>3.82</TotalCell>
                  <TotalCell />
                </tr>
              </tbody>
            </Orders>
          </TableArea>
          <TerminalTabs>
            {["Trade", "Account History", "Alerts", "Mailbox", "Experts", "Journal"].map((tab, i) => (
              <TerminalTab key={tab} $active={i === 0}>{tab}</TerminalTab>
            ))}
          </TerminalTabs>
        </TerminalBody>
      </Terminal>

      <StatusBar>
        <StatusHelp>For Help, press F1</StatusHelp>
        <StatusCell $w={109}>Default</StatusCell>
        <StatusCell $w={101}>2008.04.28 16:10</StatusCell>
        <StatusCell $w={72}>O: 0.7843</StatusCell>
        <StatusCell $w={71}>H: 0.7843</StatusCell>
        <StatusCell $w={69}>L: 0.7841</StatusCell>
        <StatusCell $w={71}>C: 0.7842</StatusCell>
        <StatusCell $w={66}>V: 53</StatusCell>
        <StatusCell $w={147}>
          <TrafficIcon />
          2981/4 kb
        </StatusCell>
        <Svg w={15} h={16}>
          <path d="M1 16L15 2M5 16L15 6M9 16l6-6" stroke="#a5a4a8" strokeWidth="1.500" />
        </Svg>
      </StatusBar>
      <BottomEdge />
    </Page>
  );
};

export default App;
